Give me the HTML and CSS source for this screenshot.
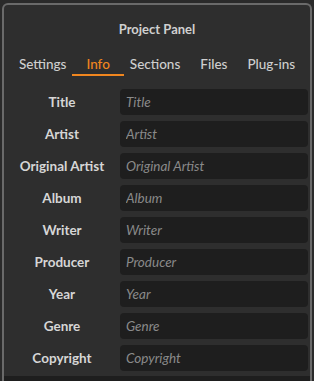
FILE: index.html
```html
<!DOCTYPE html>
<html lang="en">

<head>
    <meta charset="UTF-8">
    <meta name="viewport" content="width=device-width, initial-scale=1.0">
    <title>Project Panel</title>
    <link rel="stylesheet" href="styles.css">
</head>

<body>
    <div class="panel">
        <h1>Project Panel</h1>

        <nav class="tabs">
            <span class="tab">Settings</span>
            <span class="tab active">Info</span>
            <span class="tab">Sections</span>
            <span class="tab">Files</span>
            <span class="tab">Plug-ins</span>
        </nav>

        <form class="info">
            <label for="title">Title</label>
            <input type="text" id="title" placeholder="Title">

            <label for="artist">Artist</label>
            <input type="text" id="artist" placeholder="Artist">

            <label for="original">Original Artist</label>
            <input type="text" id="original" placeholder="Original Artist">

            <label for="album">Album</label>
            <input type="text" id="album" placeholder="Album">

            <label for="writer">Writer</label>
            <input type="text" id="writer" placeholder="Writer">

            <label for="producer">Producer</label>
            <input type="text" id="producer" placeholder="Producer">

            <label for="year">Year</label>
            <input type="text" id="year" placeholder="Year">

            <label for="genre">Genre</label>
            <input type="text" id="genre" placeholder="Genre">

            <label for="copyright">Copyright</label>
            <input type="text" id="copyright" placeholder="Copyright">
        </form>

        <div class="footer"></div>
    </div>
</body>

</html>
```

FILE: styles.css
```css
body {
    font-family: Lato, "Open Sans", sans-serif;
    background-color: #2a2a2a;
    color: #d4d4d4;
    margin: 0;
    padding: 0;
    overflow: hidden;
}

.panel {
    margin: 3px 2px 0;
    background-color: #2e2e2e;
    border: 2px solid #6a6a6a;
    border-bottom: none;
    border-radius: 6px 6px 0 0;
}

h1 {
    margin: 14px 0 0;
    font-size: 13px;
    line-height: 20px;
    font-weight: bold;
    text-align: center;
    color: #d0d0d0;
}

.tabs {
    display: flex;
    justify-content: center;
    margin-top: 15px;
}

.tab {
    padding: 0 14px;
    margin: 0 -4px;
    font-size: 13.5px;
    font-weight: 500;
    line-height: 20px;
    color: #cfcfcf;
    border-bottom: 2px solid transparent;
}

.tab.active {
    color: #f0861f;
    border-bottom-color: #f0861f;
}

.info {
    display: grid;
    grid-template-columns: 116px 1fr;
    row-gap: 6px;
    margin: 13px 2px 5px 0;
}

label {
    font-size: 13.5px;
    font-weight: bold;
    line-height: 26px;
    text-align: center;
    color: #d6d6d6;
}

input {
    height: 26px;
    padding: 0 6px;
    border: none;
    border-radius: 4px;
    background-color: #1e1e1e;
    box-sizing: border-box;
    font-family: Lato, sans-serif;
    font-size: 13.5px;
    font-style: italic;
    color: #d6d6d6;
}

input::placeholder {
    color: #8a8a8a;
}

.footer {
    height: 5px;
    background-color: #1e1e1e;
}
```
